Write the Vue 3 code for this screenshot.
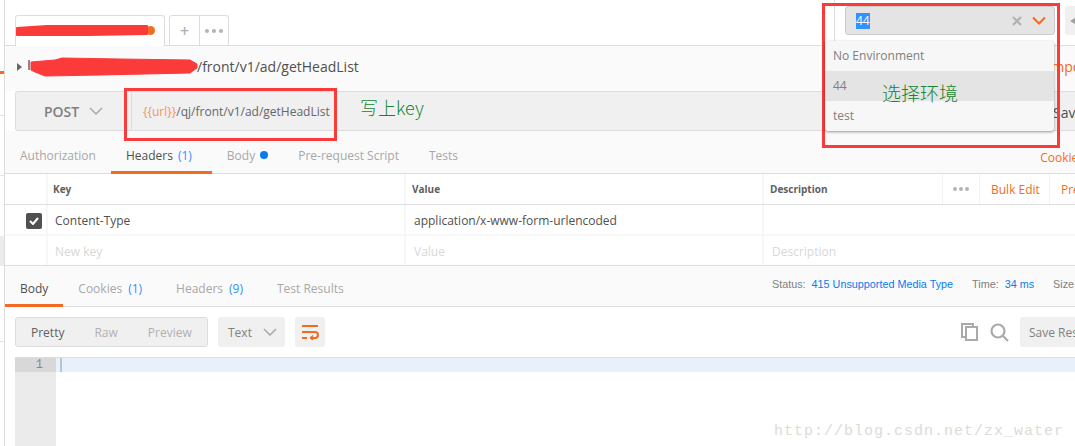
<script setup>
const urlVar = '{{url}}'
const sideLines = [115, 175, 341]
const requestTabs = [
  { label: 'Authorization' },
  { label: 'Headers', count: '(1)', active: true },
  { label: 'Body', dot: true },
  { label: 'Pre-request Script' },
  { label: 'Tests' },
]
const responseTabs = [
  { label: 'Body', active: true },
  { label: 'Cookies', count: '(1)' },
  { label: 'Headers', count: '(9)' },
  { label: 'Test Results' },
]
</script>

<template>
  <div class="page">
    <div class="sidebar">
      <span class="side-orange"></span>
      <span class="side-row"></span>
      <span v-for="y in sideLines" :key="y" class="side-line" :style="{ top: y + 'px' }"></span>
    </div>
    <div class="main">
      <div class="tabbar">
        <div class="tab"><span class="tab-dot"></span></div>
        <div class="tab-actions">
          <span class="tab-btn plus">+</span>
          <span class="tab-btn more">
            <svg width="18" height="4" viewBox="0 0 18 4" fill="#b4b4b4"><circle cx="2" cy="2" r="2" /><circle cx="9" cy="2" r="2" /><circle cx="16" cy="2" r="2" /></svg>
          </span>
        </div>
        <div class="env-area">
          <div class="env-select">
            <span class="env-value">44</span>
            <svg class="env-x" width="10" height="10" viewBox="0 0 10 10"><path d="M1 1l8 8M9 1l-8 8" stroke="#b0b0b0" stroke-width="2" fill="none" /></svg>
            <svg class="env-arrow" width="14" height="9" viewBox="0 0 14 9"><path d="M1 1.500l6 6 6-6" stroke="#f26b21" stroke-width="2" fill="none" /></svg>
          </div>
          <div class="eye-btn">
            <svg width="10" height="12" viewBox="0 0 10 12"><path d="M0 6l10-6v12z" fill="#a0a0a0" /></svg>
          </div>
        </div>
      </div>

      <div class="crumb">
        <svg width="6" height="8" viewBox="0 0 6 8"><path d="M0 0l5 4-5 4z" fill="#666" /></svg>
        <span class="crumb-text">/front/v1/ad/getHeadList</span>
        <span class="import">Import</span>
      </div>

      <div class="urlrow">
        <div class="method">POST
          <svg width="14" height="8" viewBox="0 0 14 8"><path d="M1 1l6 6 6-6" stroke="#a8a8a8" stroke-width="1.5" fill="none" /></svg>
        </div>
        <div class="url"><span class="var">{{ urlVar }}</span>/qj/front/v1/ad/getHeadList</div>
        <div class="save">Save</div>
      </div>

      <div class="reqtabs">
        <div v-for="t in requestTabs" :key="t.label" class="reqtab" :class="{ active: t.active }">
          {{ t.label }}
          <span v-if="t.count" class="count">{{ t.count }}</span>
          <span v-if="t.dot" class="blue-dot"></span>
        </div>
        <span class="cookies">Cookies</span>
      </div>

      <div class="row head">
        <div class="c-check"></div>
        <div class="c-key">Key</div>
        <div class="c-val">Value</div>
        <div class="c-desc">Description</div>
        <div class="c-more">
          <svg width="16" height="4" viewBox="0 0 16 4" fill="#b4b4b4"><circle cx="2" cy="2" r="2" /><circle cx="8" cy="2" r="2" /><circle cx="14" cy="2" r="2" /></svg>
        </div>
        <div class="c-bulk">Bulk Edit</div>
        <div class="c-pre">Presets</div>
      </div>
      <div class="row filled">
        <div class="c-check">
          <span class="checkbox">
            <svg width="10" height="8" viewBox="0 0 10 8"><path d="M1 4l3 3 5-6" stroke="#fff" stroke-width="2" fill="none" /></svg>
          </span>
        </div>
        <div class="c-key">Content-Type</div>
        <div class="c-val">application/x-www-form-urlencoded</div>
        <div class="c-desc"></div>
      </div>
      <div class="row empty">
        <div class="c-check"></div>
        <div class="c-key">New key</div>
        <div class="c-val">Value</div>
        <div class="c-desc">Description</div>
      </div>

      <div class="restabs">
        <div v-for="t in responseTabs" :key="t.label" class="restab" :class="{ active: t.active }">
          {{ t.label }}
          <span v-if="t.count" class="count">{{ t.count }}</span>
        </div>
        <div class="status">
          <span>Status:</span><b>415 Unsupported Media Type</b>
          <span class="gap">Time:</span><b>34 ms</b>
          <span class="gap">Size</span>
        </div>
      </div>

      <div class="toolbar">
        <div class="modes">
          <span class="on">Pretty</span><span>Raw</span><span>Preview</span>
        </div>
        <div class="lang">Text
          <svg width="14" height="8" viewBox="0 0 14 8"><path d="M1 1l6 6 6-6" stroke="#a8a8a8" stroke-width="1.5" fill="none" /></svg>
        </div>
        <div class="wrap">
          <svg width="18" height="16" viewBox="0 0 18 16" fill="none" stroke="#f26b21" stroke-width="2">
            <path d="M1 2h16M1 8h13a2.500 2.500 0 0 1 0 6h-4M1 14h5" />
            <path d="M12 11.500l-2.500 2.500 2.500 2" stroke-width="1.500" />
          </svg>
        </div>
        <div class="tool-right">
          <svg width="18" height="18" viewBox="0 0 18 18" fill="none" stroke="#aaa" stroke-width="2">
            <path d="M12 3V1H1v13h4" />
            <path d="M5 4h11v13H5z" />
          </svg>
          <svg width="19" height="19" viewBox="0 0 19 19" fill="none" stroke="#aaa" stroke-width="2.200">
            <circle cx="8" cy="8" r="6.500" />
            <path d="M13 13l5 5" />
          </svg>
          <div class="save-res">Save Res</div>
        </div>
      </div>

      <div class="editor">
        <div class="gutter"><div class="line-no">1</div></div>
        <div class="code"><div class="line"><span class="cursor"></span></div></div>
      </div>
    </div>

    <!-- red scribbles and notes on top of the screenshot -->
    <svg class="scribble" width="1075" height="446" viewBox="0 0 1075 446">
      <path d="M29 60v10" stroke="#666" stroke-width="1.500" />
      <path d="M17 28l30-2 50 0 50 0v8l-60 1-40 0-30 0z" fill="#fb3a3a" stroke="#fb3a3a" stroke-linejoin="round" stroke-width="2" />
      <path d="M31 62l24-2 7-2 58 1 70 1 7 4v4l-7 5-90 2-55 1-10-4-4-2z" fill="#fb3a3a" stroke="#fb3a3a" stroke-linejoin="round" />
    </svg>
    <div class="mark-box url-box"></div>
    <div class="mark-box env-box"></div>
    <div class="env-menu">
      <div class="env-item">No Environment</div>
      <div class="env-item sel">44</div>
      <div class="env-item">test</div>
    </div>
    <div class="note note-key">写上key</div>
    <div class="note note-env">选择环境</div>
    <div class="watermark">http://blog.csdn.net/zx_water</div>
  </div>
</template>

<style>
html, body {
  margin: 0;
  background: #fff;
}
</style>

<style scoped>
.page {
  position: relative;
  display: flex;
  width: 1075px;
  height: 446px;
  overflow: hidden;
  font-family: "Open Sans", "Noto Sans", sans-serif;
  font-size: 12px;
  color: #808080;
}

.sidebar {
  position: relative;
  width: 4px;
  background: #fff;
  border-right: 1px solid #ddd;
  flex: none;
}

.side-orange {
  position: absolute;
  left: 0;
  top: 71px;
  width: 4px;
  height: 3px;
  background: #f26b21;
}

.side-row {
  position: absolute;
  left: 0;
  top: 236px;
  width: 4px;
  height: 30px;
  background: #ececec;
}

.side-line {
  position: absolute;
  left: 0;
  width: 4px;
  height: 1px;
  background: #e4e4e4;
}

.main {
  flex: 1;
  min-width: 0;
  display: flex;
  flex-direction: column;
}

.tabbar {
  display: flex;
  height: 46px;
  padding-top: 15px;
  padding-left: 10px;
  box-sizing: border-box;
  background: #fff;
  border-bottom: 1px solid #ddd;
}

.tab {
  width: 150px;
  height: 31px;
  box-sizing: border-box;
  border: 1px solid #ddd;
  border-bottom: none;
  border-radius: 3px 3px 0 0;
  background: #fff;
  position: relative;
}

.tab-dot {
  position: absolute;
  right: 9px;
  top: 10px;
  width: 9px;
  height: 9px;
  border-radius: 50%;
  background: #f26b21;
}

.tab-actions {
  display: flex;
  margin-left: 4px;
  height: 30px;
  box-sizing: border-box;
  border: 1px solid #ddd;
  border-bottom: none;
  border-radius: 3px 3px 0 0;
}

.tab-btn {
  display: flex;
  align-items: center;
  justify-content: center;
  box-sizing: border-box;
  color: #b0b0b0;
}

.plus {
  width: 30px;
  font-size: 16px;
  font-weight: 600;
  border-right: 1px solid #ddd;
}

.more {
  width: 28px;
}

.env-area {
  margin-left: auto;
  margin-top: -15px;
  padding-left: 10px;
  display: flex;
  align-items: flex-start;
  height: 45px;
  border-left: 1px solid #ddd;
}

.env-select {
  width: 210px;
  height: 29px;
  margin-top: 6px;
  box-sizing: border-box;
  background: #e4e4e4;
  border: 1px solid #ccc;
  border-radius: 3px;
  display: flex;
  align-items: center;
  padding-left: 10px;
  color: #fff;
}

.env-value {
  background: #3390ff;
  line-height: 16px;
  width: 14px;
}

.env-x {
  margin-left: auto;
}

.env-arrow {
  margin: 0 8px 0 10px;
}

.eye-btn {
  width: 30px;
  height: 29px;
  margin: 6px -20px 0 10px;
  background: #f0f0f0;
  border-radius: 3px;
  display: flex;
  align-items: center;
  padding-left: 5px;
  box-sizing: border-box;
}

.crumb {
  display: flex;
  align-items: center;
  height: 45px;
  padding-left: 12px;
  padding-bottom: 4px;
  background: #fafafa;
  box-sizing: border-box;
  font-size: 14px;
  color: #505050;
}

.crumb-text {
  margin-left: 174px;
}

.import {
  margin-left: auto;
  margin-right: -17px;
  color: #f26b21;
}

.urlrow {
  display: flex;
  height: 40px;
  margin-left: 10px;
  background: #f0f0f0;
  border: 1px solid #ddd;
  border-right: none;
  border-radius: 3px 0 0 3px;
  box-sizing: border-box;
}

.method {
  width: 116px;
  flex: none;
  display: flex;
  align-items: center;
  justify-content: center;
  gap: 10px;
  box-sizing: border-box;
  font-size: 14px;
  font-weight: 600;
  color: #808080;
  border-right: 1px solid #ddd;
}

.url {
  flex: 1;
  display: flex;
  align-items: center;
  padding-left: 11px;
  color: #666;
  background: #f0f0f0;
}

.var {
  color: #f5935a;
}

.save {
  width: 55px;
  flex: none;
  display: flex;
  align-items: center;
  box-sizing: border-box;
  padding: 2px 0 0 30px;
  font-size: 14px;
  color: #505050;
  border-left: 1px solid #ddd;
  margin-right: -2px;
  white-space: nowrap;
  overflow: hidden;
}

.reqtabs, .restabs {
  display: flex;
  align-items: stretch;
  background: #fafafa;
  border-bottom: 1px solid #ddd;
  box-sizing: border-box;
}

.reqtabs {
  height: 43px;
  position: relative;
  color: #a8a8a8;
}

.reqtab {
  display: flex;
  align-items: center;
  gap: 5px;
  padding: 8px 15px 0;
  border-bottom: 3px solid transparent;
  margin-bottom: -1px;
}

.reqtab.active {
  padding-right: 20px;
}

.reqtab.active, .restab.active {
  color: #505050;
  border-bottom-color: #f26b21;
}

.count {
  color: #3390ff;
}

.blue-dot {
  width: 8px;
  height: 8px;
  border-radius: 50%;
  background: #097bed;
}

.cookies {
  position: absolute;
  right: -9px;
  top: 18px;
  color: #f26b21;
}

.row {
  display: flex;
  height: 29px;
  background: #fff;
  color: #505050;
  border-bottom: 2px solid #f7f7f7;
}

.row.head {
  height: 30px;
  border-bottom: 1px solid #ddd;
  font-size: 10px;
  font-weight: 700;
  color: #606060;
}

.row.empty {
  color: #d8d8d8;
  border-bottom: 1px solid #ddd;
}

.row > div {
  display: flex;
  flex: none;
  align-items: center;
  box-sizing: border-box;
  padding-left: 8px;
  border-right: 2px solid #f7f7f7;
  white-space: nowrap;
}

.row.filled > div {
  padding-top: 2px;
}

.row.empty > div {
  padding-top: 1px;
}

.row.head > div {
  padding-left: 6px;
}

.c-check {
  width: 43px;
  justify-content: flex-end;
}

.row > .c-key {
  width: 358px;
  padding-left: 7px;
}

.row.head > .c-key {
  padding-left: 5px;
}

.c-val {
  width: 358px;
}

.row > .c-desc {
  flex: 1;
  border-right: none;
}

.row.head > .c-desc {
  flex: none;
  width: 179px;
  border-right: 1px solid #f2f2f2;
}

.row.head > .c-more {
  width: 37px;
  padding-left: 0;
  justify-content: center;
  border-right: 1px solid #f2f2f2;
}

.row.head > .c-bulk {
  width: 70px;
  padding-left: 11px;
  font-size: 12px;
  font-weight: 400;
  color: #f26b21;
  border-right: 1px solid #f2f2f2;
}

.row.head > .c-pre {
  padding-left: 11px;
  font-size: 12px;
  font-weight: 400;
  color: #f26b21;
  border-right: none;
}

.checkbox {
  width: 16px;
  height: 16px;
  background: #505050;
  border-radius: 2px;
  display: flex;
  align-items: center;
  justify-content: center;
  margin-right: 4px;
}

.restabs {
  height: 41px;
  position: relative;
  color: #a8a8a8;
}

.restab {
  display: flex;
  align-items: center;
  gap: 6px;
  padding: 6px 15px 0;
  border-bottom: 3px solid transparent;
  margin-bottom: -1px;
  margin-right: 4px;
}

.restab.active {
  margin-right: 0;
}

.status {
  position: absolute;
  left: 767px;
  top: 12px;
  white-space: nowrap;
  font-family: "Liberation Sans", sans-serif;
  font-size: 10.8px;
  color: #808080;
}

.status b {
  font-weight: 400;
  color: #097bed;
  margin-left: 6px;
}

.status .gap {
  margin-left: 19px;
}

.toolbar {
  display: flex;
  align-items: center;
  gap: 10px;
  height: 50px;
  padding-left: 10px;
  background: #fff;
  box-sizing: border-box;
}

.modes {
  display: flex;
  align-items: center;
  gap: 30px;
  width: 193px;
  height: 30px;
  box-sizing: border-box;
  padding-left: 15px;
  background: #f0f0f0;
  border: 1px solid #ddd;
  border-radius: 3px;
  color: #b0b0b0;
}

.modes .on {
  color: #606060;
}

.lang {
  display: flex;
  align-items: center;
  gap: 11px;
  width: 67px;
  height: 30px;
  box-sizing: border-box;
  padding-left: 10px;
  background: #f0f0f0;
  border-radius: 3px;
  color: #808080;
}

.wrap {
  width: 30px;
  height: 30px;
  background: #f0f0f0;
  border-radius: 3px;
  display: flex;
  align-items: center;
  justify-content: center;
}

.tool-right {
  margin-left: auto;
  margin-right: -5px;
  display: flex;
  align-items: center;
  gap: 11px;
}

.save-res {
  width: 60px;
  height: 30px;
  background: #f0f0f0;
  border-radius: 3px;
  display: flex;
  align-items: center;
  padding-left: 9px;
  box-sizing: border-box;
  white-space: nowrap;
  overflow: hidden;
}

.editor {
  flex: 1;
  display: flex;
  margin-left: 10px;
  border-top: 1px solid #ddd;
}

.gutter {
  width: 41px;
  background: #ebebeb;
}

.line-no {
  height: 14px;
  background: #d8d8d8;
  text-align: right;
  padding-right: 13px;
  line-height: 14px;
  color: #888;
  font-family: "Liberation Mono", monospace;
  font-size: 12px;
}

.code {
  flex: 1;
}

.line {
  height: 14px;
  background: #e8f0fb;
  padding-left: 4px;
}

.cursor {
  display: block;
  width: 2px;
  height: 14px;
  background: #b8c4d0;
}

.scribble {
  position: absolute;
  left: 0;
  top: 0;
  pointer-events: none;
}

.mark-box {
  position: absolute;
  box-sizing: border-box;
  border: 3px solid #fb3a3a;
}

.url-box {
  left: 124px;
  top: 88px;
  width: 213px;
  height: 53px;
}

.env-box {
  left: 822px;
  top: 3px;
  width: 238px;
  height: 145px;
}

.env-menu {
  position: absolute;
  left: 825px;
  top: 41px;
  width: 229px;
  background: #f7f7f7;
  border-radius: 3px;
  box-shadow: 0 1px 3px rgba(0, 0, 0, 0.4);
  color: #808080;
}

.env-item {
  height: 30px;
  line-height: 30px;
  padding-left: 8px;
}

.env-item.sel {
  background: #e4e4e4;
}

.note {
  position: absolute;
  font-family: "Noto Sans CJK SC", sans-serif;
  font-weight: 300;
  color: #15852f;
  white-space: nowrap;
}

.note-key {
  left: 360px;
  top: 94px;
  font-size: 18px;
}

.note-env {
  left: 882px;
  top: 79px;
  font-size: 19px;
}

.watermark {
  position: absolute;
  right: 11px;
  bottom: 6px;
  font-family: "Liberation Mono", monospace;
  font-size: 15px;
  letter-spacing: 1px;
  color: #dcdcd5;
}
</style>
